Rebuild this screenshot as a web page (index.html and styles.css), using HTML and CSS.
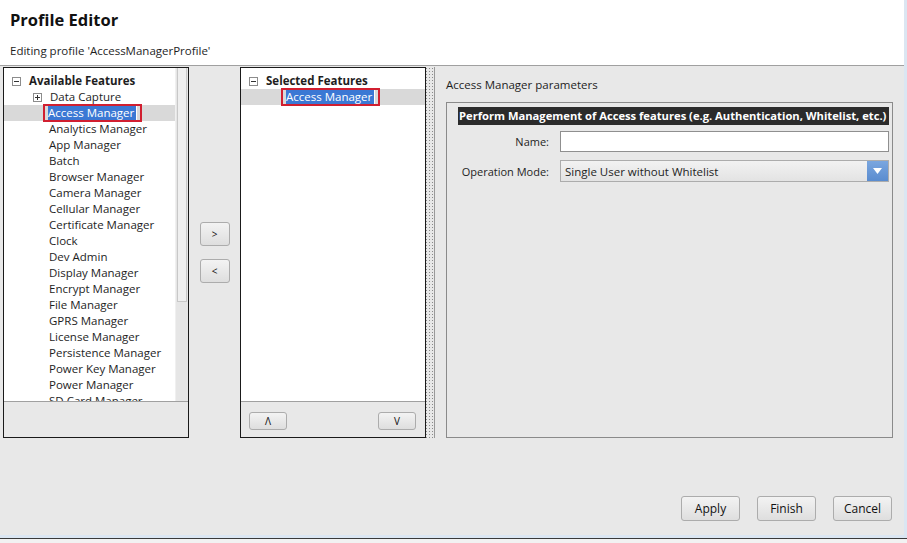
FILE: index.html
```html
<!DOCTYPE html>
<html>
<head>
<meta charset="utf-8">
<link rel="stylesheet" href="styles.css">
</head>
<body>
<div class="window">
  <div class="app">
    <header class="header">
      <h1 class="title">Profile Editor</h1>
      <div class="subtitle">Editing profile 'AccessManagerProfile'</div>
    </header>
    <main class="content">
      <section class="panel avail">
        <div class="panel-main">
          <div class="tree">
            <div class="row root"><span class="box"></span><span class="bold">Available Features</span></div>
            <div class="row child"><span class="box plus"></span>Data Capture</div>
            <div class="row child leaf sel-row"><span class="mark"><span class="hl">Access Manager</span></span></div>
            <div class="row child leaf">Analytics Manager</div>
            <div class="row child leaf">App Manager</div>
            <div class="row child leaf">Batch</div>
            <div class="row child leaf">Browser Manager</div>
            <div class="row child leaf">Camera Manager</div>
            <div class="row child leaf">Cellular Manager</div>
            <div class="row child leaf">Certificate Manager</div>
            <div class="row child leaf">Clock</div>
            <div class="row child leaf">Dev Admin</div>
            <div class="row child leaf">Display Manager</div>
            <div class="row child leaf">Encrypt Manager</div>
            <div class="row child leaf">File Manager</div>
            <div class="row child leaf">GPRS Manager</div>
            <div class="row child leaf">License Manager</div>
            <div class="row child leaf">Persistence Manager</div>
            <div class="row child leaf">Power Key Manager</div>
            <div class="row child leaf">Power Manager</div>
            <div class="row child leaf">SD Card Manager</div>
          </div>
          <div class="vscroll"><div class="thumb"></div></div>
        </div>
        <div class="panel-foot"></div>
      </section>

      <div class="movers">
        <button class="btn small">&gt;</button>
        <button class="btn small">&lt;</button>
      </div>

      <section class="panel selected">
        <div class="panel-main">
          <div class="tree">
            <div class="row root"><span class="box"></span><span class="bold">Selected Features</span></div>
            <div class="row sel-row sel-item"><span class="mark"><span class="hl">Access Manager</span></span></div>
          </div>
        </div>
        <div class="panel-foot order">
          <button class="btn arrow">&#x39B;</button>
          <button class="btn arrow">V</button>
        </div>
      </section>

      <div class="splitter"></div>

      <section class="params">
        <div class="params-title">Access Manager parameters</div>
        <div class="group">
          <div class="group-head">Perform Management of Access features (e.g. Authentication, Whitelist, etc.)</div>
          <div class="form">
            <label class="lbl">Name:</label>
            <div class="input"></div>
            <label class="lbl">Operation Mode:</label>
            <div class="select"><span>Single User without Whitelist</span><span class="drop"><svg width="9" height="6" viewBox="0 0 9 6"><path d="M0 0 H9 L4.5 6 Z" fill="#fff"/></svg></span></div>
          </div>
        </div>
      </section>
    </main>
    <footer class="footer">
      <button class="btn big">Apply</button>
      <button class="btn big">Finish</button>
      <button class="btn big">Cancel</button>
    </footer>
  </div>
  <div class="taskbar"></div>
</div>
</body>
</html>
```

FILE: styles.css
```css
* { box-sizing: border-box; }
html, body { margin: 0; padding: 0; }
body {
  width: 907px;
  height: 543px;
  overflow: hidden;
  font-family: "Open Sans", "Noto Sans", sans-serif;
  font-size: 11.5px;
  color: #1e1e1e;
  background: #e8e8e8;
}
.window {
  width: 907px;
  height: 543px;
  display: flex;
  flex-direction: column;
}
.app {
  flex: 1;
  display: flex;
  flex-direction: column;
  background: #e8e8e8;
  border-right: 3px solid #dbe6f2;
}
.header {
  background: #fff;
  height: 66px;
  border-bottom: 1px solid #a0a0a0;
  padding: 8px 10px 0 10px;
}
.title {
  margin: 0;
  font-size: 16.5px;
  font-weight: 700;
  line-height: 24px;
  color: #111;
}
.subtitle {
  margin-top: 11px;
  font-size: 11.5px;
  line-height: 16px;
}
.content {
  display: flex;
  height: 372px;
  padding: 1px 0 0 3px;
}
.panel {
  width: 186px;
  height: 371px;
  border: 1px solid #1a1a1a;
  display: flex;
  flex-direction: column;
  background: #e8e8e8;
}
.panel-main {
  flex: 1;
  display: flex;
  background: #fff;
  border-bottom: 1px solid #a0a0a0;
  overflow: hidden;
}
.panel-foot { height: 35px; }
.tree {
  flex: 1;
  padding-top: 5px;
  overflow: hidden;
}
.row {
  height: 16px;
  line-height: 16px;
  white-space: nowrap;
  display: flex;
  align-items: center;
}
.root { padding-left: 8px; }
.child { padding-left: 29px; }
.child.leaf { padding-left: 45px; }
.bold { font-weight: 700; }
.box {
  position: relative;
  flex: none;
  width: 9px;
  height: 9px;
  border: 1px solid #8c8c8c;
  margin-right: 8px;
  background: #fff;
}
.box::before {
  content: "";
  position: absolute;
  left: 1px;
  top: 3px;
  width: 5px;
  height: 1px;
  background: #333;
}
.box.plus::after {
  content: "";
  position: absolute;
  left: 3px;
  top: 1px;
  width: 1px;
  height: 5px;
  background: #333;
}
.sel-row { background: #d9d9d9; }
.mark {
  display: inline-flex;
  height: 18px;
  border: 2px solid #d11f30;
  padding: 0 3px 0 3px;
  align-items: center;
  margin-left: -6px;
}
.hl {
  background: #3b78d4;
  color: #fff;
  line-height: 14px;
  padding: 0 2px 0 0;
  border-right: 1px solid #fff;
}
.sel-item { padding-left: 40px; }
.sel-item .mark { margin-left: 0; }
.vscroll {
  width: 13px;
  flex: none;
  background: #e6e6e6;
  border-left: 1px solid #f0f0f0;
  padding: 0 1px 0 1px;
}
.thumb {
  height: 234px;
  background: #efefef;
  border: 1px solid #c8c8c8;
  border-top: none;
}
.movers {
  width: 51px;
  display: flex;
  flex-direction: column;
  align-items: center;
  padding-top: 155px;
  gap: 13px;
}
.btn {
  font-family: "Open Sans", "Noto Sans", sans-serif;
  font-size: 11px;
  color: #111;
  background: linear-gradient(#f3f3f3, #dedede);
  border: 1px solid #acacac;
  border-radius: 3px;
  padding: 0;
  cursor: default;
}
.btn.small {
  width: 30px;
  height: 24px;
  font-size: 10px;
}
.order {
  display: flex;
  justify-content: space-between;
  align-items: flex-start;
  padding: 10px 9px 0 8px;
}
.btn.arrow {
  width: 38px;
  height: 18px;
  font-size: 10px;
  line-height: 16px;
}
.splitter {
  width: 9px;
  height: 371px;
  background-image: radial-gradient(circle, #8a8a8a 0.7px, transparent 0.9px);
  background-size: 3px 3px;
  background-position: 2px 0;
  background-color: #e8e8e8;
  border-right: 1px solid #9a9a9a;
}
.params {
  flex: 1;
  height: 371px;
  padding: 9px 11px 0 11px;
  display: flex;
  flex-direction: column;
}
.params-title {
  line-height: 18px;
  height: 18px;
  margin-bottom: 8px;
}
.group {
  flex: 1;
  border: 1px solid #8a8a8a;
  padding: 4px 3px 0 11px;
}
.group-head {
  background: #2b2b2b;
  color: #fff;
  font-weight: 700;
  font-size: 11.2px;
  height: 18px;
  line-height: 18px;
  white-space: nowrap;
  padding-left: 1px;
  overflow: hidden;
}
.form {
  display: grid;
  grid-template-columns: 91px 1fr;
  column-gap: 11px;
  row-gap: 8px;
  margin-top: 6px;
  align-items: center;
}
.lbl {
  text-align: right;
  white-space: nowrap;
  font-size: 11px;
}
.input {
  height: 21px;
  background: #fff;
  border: 1px solid #8f8f8f;
}
.select {
  height: 22px;
  border: 1px solid #acacac;
  background: linear-gradient(#f2f2f2, #e3e3e3);
  display: flex;
  align-items: center;
  justify-content: space-between;
  padding-left: 4px;
}
.drop {
  width: 21px;
  height: 20px;
  background: linear-gradient(#7aa6df, #5a8ccf);
  display: flex;
  align-items: center;
  justify-content: center;
}
.footer {
  flex: 1;
  display: flex;
  justify-content: flex-end;
  align-items: flex-start;
  padding: 58px 12px 0 0;
  gap: 17px;
}
.btn.big {
  width: 59px;
  height: 25px;
  font-size: 12px;
}
.taskbar {
  height: 8px;
  background: #f2f2f2;
  border-top: 3px solid #dbe6f2;
  box-shadow: inset 0 1px 0 #3a3a3a;
}
```
